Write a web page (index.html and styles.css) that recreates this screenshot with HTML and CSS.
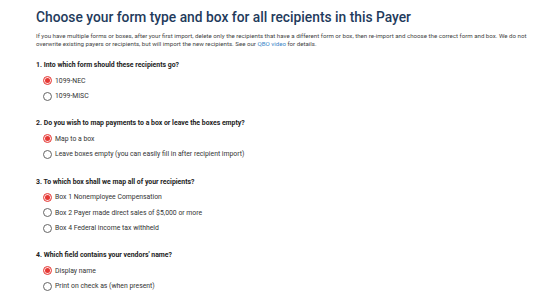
FILE: index.html
```html
<!DOCTYPE html>
<html>
<head>
<meta charset="utf-8">
<link rel="stylesheet" href="styles.css">
</head>
<body>
<div class="page">
  <h1 class="title">Choose your form type and box for all recipients in this Payer</h1>
  <p class="intro">If you have multiple forms or boxes, after your first import, delete only the recipients that have a different form or box, then re-import and choose the correct form and box. We do not overwrite existing payers or recipients, but will import the new recipients. See our <a class="link" href="#">QBO video</a> for details.</p>

  <div class="section">
    <div class="question">1. Into which form should these recipients go?</div>
    <label class="option"><span class="radio checked"></span><span>1099-NEC</span></label>
    <label class="option"><span class="radio"></span><span>1099-MISC</span></label>
  </div>

  <div class="section">
    <div class="question">2. Do you wish to map payments to a box or leave the boxes empty?</div>
    <label class="option"><span class="radio checked"></span><span>Map to a box</span></label>
    <label class="option"><span class="radio"></span><span>Leave boxes empty (you can easily fill in after recipient import)</span></label>
  </div>

  <div class="section">
    <div class="question">3. To which box shall we map all of your recipients?</div>
    <label class="option"><span class="radio checked"></span><span>Box 1 Nonemployee Compensation</span></label>
    <label class="option"><span class="radio"></span><span>Box 2 Payer made direct sales of $5,000 or more</span></label>
    <label class="option"><span class="radio"></span><span>Box 4 Federal income tax withheld</span></label>
  </div>

  <div class="section">
    <div class="question">4. Which field contains your vendors' name?</div>
    <label class="option"><span class="radio checked"></span><span>Display name</span></label>
    <label class="option"><span class="radio"></span><span>Print on check as (when present)</span></label>
  </div>
</div>
</body>
</html>
```

FILE: styles.css
```css
html, body {
  margin: 0;
  padding: 0;
  background: #ffffff;
}
.page {
  font-family: Roboto, "Liberation Sans", Arial, sans-serif;
  padding: 8px 0 0 36px;
  width: 492px;
  color: #333333;
}
.title {
  margin: 0;
  font-size: 13.8px;
  line-height: 18px;
  font-weight: 500;
  color: #1f3b5c;
}
.intro {
  margin: 7px 0 0;
  font-size: 6.15px;
  line-height: 7.5px;
  color: #444444;
}
.link {
  color: #3a86c8;
  text-decoration: none;
}
.section {
  display: flex;
  flex-direction: column;
  margin-top: 12px;
}
.section + .section {
  margin-top: 14.5px;
}
.question {
  font-size: 6.9px;
  line-height: 10px;
  font-weight: 700;
  color: #222222;
  margin-bottom: 2.75px;
}
.option {
  display: flex;
  align-items: center;
  gap: 3px;
  height: 15.5px;
  padding-left: 7px;
  font-size: 6.85px;
  color: #333333;
}
.radio {
  box-sizing: border-box;
  width: 9px;
  height: 9px;
  border-radius: 50%;
  border: 0.8px solid #666666;
  background: #ffffff;
  flex: none;
  position: relative;
}
.radio.checked {
  border-color: #e53935;
  background: #fde3e3;
}
.radio.checked::after {
  content: "";
  position: absolute;
  left: 50%;
  top: 50%;
  width: 5px;
  height: 5px;
  margin: -2.5px 0 0 -2.5px;
  border-radius: 50%;
  background: #e53935;
}
```
